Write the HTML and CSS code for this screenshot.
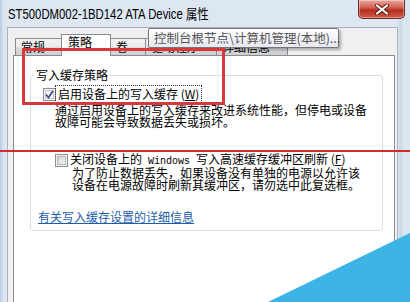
FILE: index.html
```html
<!DOCTYPE html>
<html>
<head>
  <meta charset="utf-8">
  <meta name="viewport" content="width=device-width">
  <title>ST500DM002-1BD142 ATA Device 属性</title>
  <link rel="stylesheet" href="styles.css">
</head>
<body>
  <div class="window">
    <!-- title bar -->
    <div class="titlebar">
      <span class="title">ST500DM002-1BD142 ATA Device 属性</span>
      <div class="close-btn">
        <svg width="16" height="11" viewBox="0 0 16 11">
          <path d="M3 1.5 L13 9.5 M13 1.5 L3 9.5" stroke="#5a1c16" stroke-width="4" stroke-linecap="round"/>
          <path d="M3 1.5 L13 9.5 M13 1.5 L3 9.5" stroke="#ffffff" stroke-width="2.2" stroke-linecap="round"/>
        </svg>
      </div>
    </div>

    <div class="dialog">
      <div class="tabs">
        <div class="tab">常规</div>
        <div class="tab active">策略</div>
        <div class="tab">卷</div>
        <div class="tab">驱动程序</div>
        <div class="tab">详细信息</div>
      </div>

      <div class="panel">
        <fieldset class="group">
          <legend>写入缓存策略</legend>
          <div class="group-body">
            <div class="opt">
              <span class="check">
                <svg width="13" height="13" viewBox="0 0 13 13">
                  <rect x="0.5" y="0.5" width="12" height="12" fill="#f4f4f4" stroke="#8e8f8f"/>
                  <rect x="2.5" y="2.5" width="8" height="8" fill="#ffffff" stroke="#c8c8c8"/>
                  <path d="M3 6.5 L5.5 9.5 L10 3" fill="none" stroke="#3c4f8c" stroke-width="1.8"/>
                </svg>
              </span>
              <span class="opt-text focused">启用设备上的写入缓存 (<u>W</u>)</span>
            </div>
            <p class="desc">通过启用设备上的写入缓存来改进系统性能，但停电或设备<br>故障可能会导致数据丢失或损坏。</p>

            <div class="opt opt-2">
              <span class="check">
                <svg width="13" height="13" viewBox="0 0 13 13">
                  <defs>
                    <linearGradient id="box" x1="0" y1="0" x2="1" y2="1">
                      <stop offset="0" stop-color="#cfcfcf"/>
                      <stop offset="1" stop-color="#f7f7f7"/>
                    </linearGradient>
                  </defs>
                  <rect x="0.5" y="0.5" width="12" height="12" fill="#f4f4f4" stroke="#8e8f8f"/>
                  <rect x="2.5" y="2.5" width="8" height="8" fill="url(#box)" stroke="#b5b5b5"/>
                </svg>
              </span>
              <span class="opt-text">关闭设备上的<span class="mono"> Windows </span>写入高速缓存缓冲区刷新 (<u>F</u>)</span>
            </div>
            <p class="desc desc-2">为了防止数据丢失，如果设备没有单独的电源以允许该<br>设备在电源故障时刷新其缓冲区，请勿选中此复选框。</p>

            <a class="more" href="#">有关写入缓存设置的详细信息</a>
          </div>
        </fieldset>
      </div>
    </div>

    <!-- things lying over the dialog -->
    <div class="tooltip">控制台根节点\计算机管理(本地)...</div>
    <div class="mark-box"></div>
    <div class="mark-line"></div>
    <div class="corner"></div>
  </div>
</body>
</html>
```

FILE: styles.css
```css
body {
  margin: 0;
  font-family: "Noto Sans CJK SC", sans-serif;
  font-size: 12px;
  color: #000;
}

.window {
  position: relative;
  width: 410px;
  height: 302px;
  overflow: hidden;
  background: linear-gradient(to right, #b4cbe3 0, #d6e2ef 3px, #dde7f2 6px, #dde7f2 398px, #c9d7e6 400px, #dbe5f0 404px);
}

/* title bar */
.titlebar {
  height: 27px;
  display: flex;
  justify-content: space-between;
  align-items: flex-start;
}

.title {
  font-family: "Liberation Sans", "Noto Sans CJK SC", sans-serif;
  font-size: 14px;
  line-height: 16px;
  margin: 6px 0 0 8px;
  white-space: nowrap;
  transform: scaleX(0.81);
  transform-origin: left center;
}

.close-btn {
  width: 45px;
  height: 18px;
  margin-right: 5px;
  border: 1px solid #6b2f2a;
  border-top: none;
  border-radius: 0 0 5px 5px;
  background: linear-gradient(#e9aa9f, #d0584a 45%, #b62c1e 55%, #cf5a45);
  display: flex;
  align-items: center;
  justify-content: center;
  box-shadow: inset 0 0 0 1px rgba(255, 255, 255, 0.35);
}

/* dialog body */
.dialog {
  margin: 0 12px 0 7px;
  height: 275px;
  background: #f0f0f0;
  border: 1px solid #a9b3be;
  border-bottom: none;
  padding: 6px 2px 0 5px;
}

.tabs {
  display: flex;
  align-items: flex-end;
  height: 21px;
  margin-left: 2px;
  position: relative;
  z-index: 1;
}

.tab {
  height: 17px;
  box-sizing: border-box;
  padding: 0 17px 0 5px;
  line-height: 15px;
  border: 1px solid #898c95;
  border-bottom: none;
  margin-right: -1px;
  background: linear-gradient(#f3f3f3, #ebebeb 50%, #dddddd 51%, #cfcfcf);
  white-space: nowrap;
}

.tab.active {
  height: 22px;
  margin: 0 -1px -1px -1px;
  padding: 0 18px 0 6px;
  line-height: 14px;
  background: #fff;
  position: relative;
  z-index: 2;
}

.panel {
  height: 246px;
  background: #fff;
  border: 1px solid #898c95;
  padding: 12px 11px 0 16px;
}

.group {
  margin: 0;
  padding: 0;
  height: 161px;
  border: 1px solid #d5dfe5;
  border-radius: 3px;
}

.group legend {
  margin-left: 3px;
  padding: 0 2px;
  line-height: 14px;
}

.group-body {
  padding: 5px 0 0 12px;
}

.opt {
  display: flex;
  align-items: center;
  height: 14px;
}

.check {
  width: 13px;
  height: 13px;
  display: block;
}

.check svg {
  display: block;
}

.opt-text {
  margin-left: 1px;
  padding: 0 1px;
  line-height: 14px;
  white-space: nowrap;
}

.focused {
  outline: 1px dotted #333;
  outline-offset: 1px;
}

.mono {
  font-family: "Liberation Mono", monospace;
  font-size: 10px;
}

.desc {
  margin: 3px 0 0 12px;
  line-height: 12px;
  white-space: nowrap;
}

.opt-2 {
  margin: 25px 0 0 12px;
}

.desc-2 {
  margin: 0 0 0 29px;
}

.more {
  display: inline-block;
  margin: 19px 0 0 -5px;
  color: #1c5ea9;
  line-height: 13px;
}

/* overlays */
.tooltip {
  position: absolute;
  left: 148px;
  top: 28px;
  width: 184px;
  height: 18px;
  padding-left: 5px;
  line-height: 18px;
  font-size: 12.5px;
  color: #555;
  border: 1px solid #767676;
  border-radius: 2px;
  background: linear-gradient(#ffffff, #e6e7f0);
  box-shadow: 2px 2px 3px rgba(0, 0, 0, 0.3);
  z-index: 5;
  white-space: nowrap;
}

.mark-box {
  position: absolute;
  left: 22px;
  top: 48px;
  width: 203px;
  height: 57px;
  box-sizing: border-box;
  border: 3px solid #d6383c;
  z-index: 6;
}

.mark-line {
  position: absolute;
  left: 0;
  top: 150px;
  width: 410px;
  height: 2px;
  background: #d42a2a;
  z-index: 6;
}

.corner {
  position: absolute;
  right: 0;
  bottom: 0;
  width: 142px;
  height: 69px;
  background: #3db3e6;
  clip-path: polygon(100% 0, 100% 100%, 0 100%);
  z-index: 7;
}
```
